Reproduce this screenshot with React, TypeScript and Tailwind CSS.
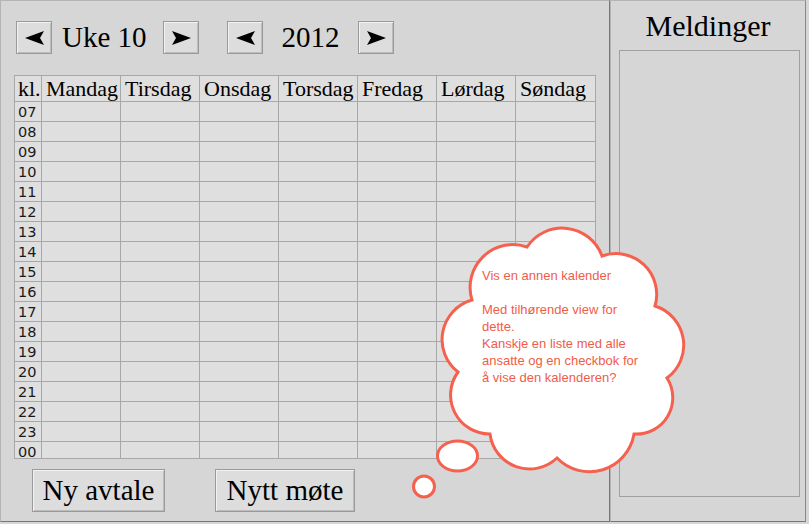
import React from "react";

const hours = ["07", "08", "09", "10", "11", "12", "13", "14", "15", "16", "17", "18", "19", "20", "21", "22", "23", "00"];
const days = ["Mandag", "Tirsdag", "Onsdag", "Torsdag", "Fredag", "Lørdag", "Søndag"];

// dips between the bumps of the thought cloud, clockwise from top-left
const cloudPoints: [number, number][] = [
  [527, 247],
  [602, 256],
  [655, 306],
  [667, 378],
  [634, 434],
  [557, 458],
  [490, 434],
  [458, 372],
  [472, 300],
];

const cloudPath = (pts: [number, number][]) => {
  let d = `M ${pts[0][0]} ${pts[0][1]}`;
  pts.forEach((_, i) => {
    const [x1, y1] = pts[i];
    const [x2, y2] = pts[(i + 1) % pts.length];
    const r = Math.hypot(x2 - x1, y2 - y1) * 0.56;
    d += ` A ${r} ${r} 0 0 1 ${x2} ${y2}`;
  });
  return d + " Z";
};

const Arrow = ({ dir }: { dir: "left" | "right" }) => (
  <svg width="21" height="16" viewBox="0 0 21 16">
    {dir === "left" ? (
      <path d="M1 8 L20 1 L16 8 L20 15 Z" fill="#000" />
    ) : (
      <path d="M20 8 L1 1 L5 8 L1 15 Z" fill="#000" />
    )}
  </svg>
);

const btn =
  "flex items-center justify-center border border-[#9a9a9a] bg-[#dddddd] shadow-[inset_1px_1px_0_#f2f2f2,inset_-1px_-1px_0_#bcbcbc]";

const App = () => {
  return (
    <div className="relative w-[809px] h-[524px] bg-[#d6d6d6] flex font-['Liberation_Serif',serif] text-black overflow-hidden">
      {/* calendar panel */}
      <div className="w-[610px] h-[522px] border-t border-l border-t-[#b4b4b4] border-l-[#b4b4b4] border-r border-b border-r-[#777777] border-b-[#777777] pl-[13px] pt-[20px]">
        <div className="flex items-center h-[33px] pl-[2px]">
          <button className={`${btn} w-[36px] h-[33px]`}>
            <Arrow dir="left" />
          </button>
          <span className="w-[111px] pl-[10px] text-[29px] leading-none">Uke 10</span>
          <button className={`${btn} w-[36px] h-[33px]`}>
            <Arrow dir="right" />
          </button>
          <button className={`${btn} w-[36px] h-[33px] ml-[28px]`}>
            <Arrow dir="left" />
          </button>
          <span className="w-[95px] text-center text-[29px] leading-none">2012</span>
          <button className={`${btn} w-[36px] h-[33px]`}>
            <Arrow dir="right" />
          </button>
        </div>

        {/* week table */}
        <div className="mt-[21px] w-[582px] h-[384px] overflow-hidden border border-[#a8a8a8] bg-[#dfdfdf]">
          <div className="grid grid-cols-[27px_repeat(7,79px)]">
            <div className="h-[26px] border-r border-b border-[#a8a8a8] pl-[3px] text-[22px] leading-[26px]">kl.</div>
            {days.map((day, i) => (
              <div
                key={day}
                className={
                  i === days.length - 1
                    ? "h-[26px] border-b border-[#a8a8a8] pl-[4px] text-[22px] leading-[26px] whitespace-nowrap"
                    : "h-[26px] border-r border-b border-[#a8a8a8] pl-[4px] text-[22px] leading-[26px] whitespace-nowrap"
                }
              >
                {day}
              </div>
            ))}
            {hours.map((h) => (
              <React.Fragment key={h}>
                <div className="h-[20px] border-r border-b border-[#a8a8a8] pl-[3px] font-['DejaVu_Sans',sans-serif] text-[14.5px] leading-[20px] text-[#1a1a1a]">
                  {h}
                </div>
                {days.map((day, i) => (
                  <div
                    key={day}
                    className={
                      i === days.length - 1
                        ? "h-[20px] border-b border-[#a8a8a8]"
                        : "h-[20px] border-r border-b border-[#a8a8a8]"
                    }
                  />
                ))}
              </React.Fragment>
            ))}
          </div>
        </div>

        <div className="flex mt-[10px] pl-[18px] gap-[50px]">
          <button className={`${btn} w-[133px] h-[43px] text-[29px] leading-none`}>Ny avtale</button>
          <button className={`${btn} w-[140px] h-[43px] text-[29px] leading-none`}>Nytt møte</button>
        </div>
      </div>

      {/* messages panel */}
      <div className="w-[196px] h-[522px] border-t border-l border-t-[#b4b4b4] border-l-[#b4b4b4] border-r border-b border-r-[#8a8a8a] border-b-[#777777] flex flex-col">
        <div className="h-[49px] pt-[10px] text-center text-[30px] leading-none">Meldinger</div>
        <div className="ml-[8px] w-[181px] h-[447px] border border-[#a0a0a0] bg-[#d6d6d6]" />
      </div>

      {/* thought cloud annotation */}
      <svg className="absolute left-0 top-0 pointer-events-none" width="809" height="524">
        <path d={cloudPath(cloudPoints)} fill="#fff" stroke="#f5614e" strokeWidth="3" />
        <ellipse cx="457.5" cy="456" rx="20" ry="15" fill="#fff" stroke="#f5614e" strokeWidth="3" />
        <circle cx="424" cy="486.5" r="10.5" fill="#fff" stroke="#f5614e" strokeWidth="3" />
      </svg>
      <div className="absolute left-[482px] top-[267px] font-['Liberation_Sans',sans-serif] text-[13px] leading-[17px] text-[#f15c4a] whitespace-pre">
        {"Vis en annen kalender\n\nMed tilhørende view for\ndette.\nKanskje en liste med alle\nansatte og en checkbok for\nå vise den kalenderen?"}
      </div>
    </div>
  );
};

export default App;
